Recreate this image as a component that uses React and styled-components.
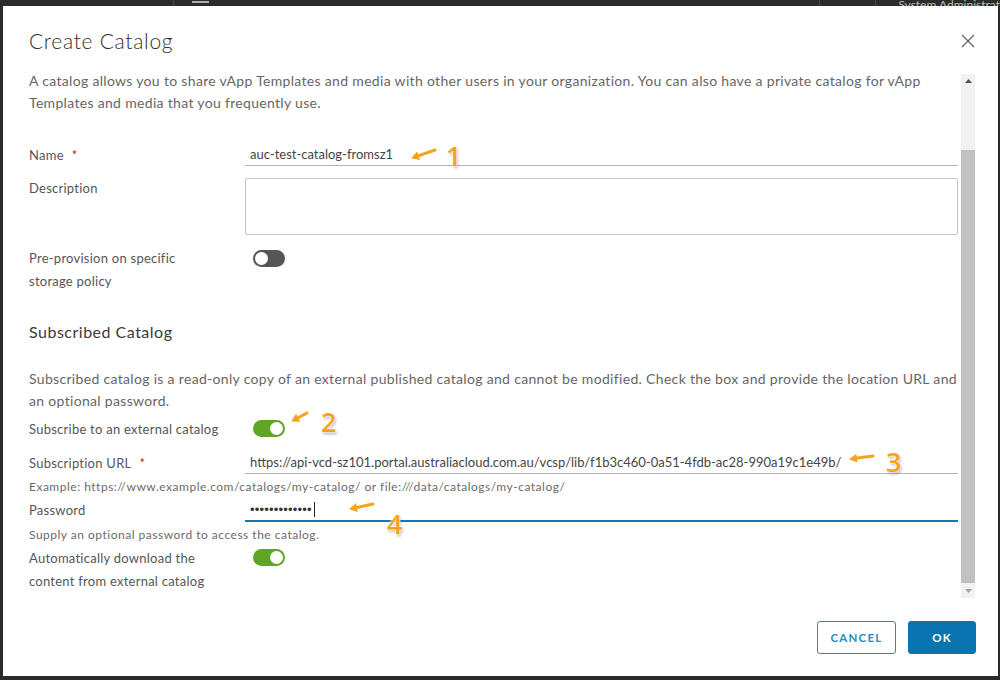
import React from "react";
import styled, { createGlobalStyle } from "styled-components";

const GlobalStyle = createGlobalStyle`
  html, body { margin: 0; padding: 0; background: #2b2b2b; }
  body { font-family: Lato, "Noto Sans", sans-serif; }
  * { box-sizing: border-box; }
`;

const Page = styled.div`
  position: relative;
  width: 1000px;
  height: 680px;
  background: #2b2b2b;
  display: flex;
  flex-direction: column;
  overflow: hidden;
`;

const TopBar = styled.div`
  height: 6px;
  flex: none;
  overflow: hidden;
  display: flex;
  align-items: flex-end;
  color: #bdbdbd;
  font-size: 12px;
`;

const TopSep = styled.div`
  width: 1px;
  height: 6px;
  background: #4a4a4a;
  margin-left: ${(p) => p.$ml}px;
`;

const TopLine = styled.div`
  width: 18px;
  height: 2px;
  background: #aaa;
  margin: 0 0 3px ${(p) => p.$ml}px;
`;

const TopText = styled.div`
  line-height: 14px;
  margin: 0 0 -6px ${(p) => p.$ml}px;
  white-space: nowrap;
`;

const Modal = styled.div`
  flex: 1;
  margin: 0 2px 4px 3px;
  background: #ffffff;
  display: flex;
  flex-direction: column;
  min-height: 0;
`;

const Header = styled.div`
  height: 64px;
  flex: none;
  display: flex;
  align-items: flex-start;
  justify-content: space-between;
  padding: 23px 23px 0 26px;
`;

const Title = styled.h3`
  margin: 0;
  font-size: 21px;
  line-height: 24px;
  font-weight: 300;
  letter-spacing: 0.7px;
  color: #2e2e2e;
`;

const CloseBtn = styled.div`
  width: 14px;
  height: 24px;
  display: flex;
  align-items: center;
  justify-content: center;
  color: #6a6a6a;
`;

const Body = styled.div`
  height: 530px;
  flex: none;
  display: flex;
  padding-left: 26px;
`;

const Content = styled.div`
  width: 929px;
  flex: none;
  overflow: hidden;
`;

const Para = styled.p`
  margin: ${(p) => p.$mt || 0}px 0 0;
  font-size: 14px;
  line-height: 22px;
  letter-spacing: 0.32px;
  white-space: nowrap;
  color: #666666;
`;

const Heading = styled.h4`
  margin: ${(p) => p.$mt}px 0 0;
  font-size: 16px;
  line-height: 22px;
  font-weight: 400;
  letter-spacing: 0.5px;
  color: #3a3a3a;
`;

const Row = styled.div`
  display: grid;
  grid-template-columns: 216px 1fr;
  align-items: start;
  margin-top: ${(p) => p.$mt}px;
`;

const Label = styled.div`
  font-size: 13px;
  line-height: ${(p) => p.$lh || 22}px;
  letter-spacing: 0.25px;
  color: #565656;
`;

const Req = styled.span`
  color: #c92100;
  margin-left: 8px;
`;

const Input = styled.div`
  height: ${(p) => (p.$focus ? 23 : 22)}px;
  line-height: 21px;
  padding-left: 5px;
  font-size: 13px;
  color: #454545;
  border-bottom: ${(p) => (p.$focus ? "2px solid #1277b5" : "1px solid #b3b3b3")};
  white-space: nowrap;
  display: flex;
  align-items: center;
`;

const Dots = styled.span`
  font-family: "Liberation Sans", Arial, sans-serif;
  font-size: 13px;
  letter-spacing: 0.2px;
  color: #333;
`;

const Caret = styled.span`
  width: 1px;
  height: 15px;
  background: #222;
  margin-left: 2px;
`;

const TextArea = styled.div`
  margin-top: 1px;
  height: 57px;
  border: 1px solid #c6c6c6;
  border-radius: 2px;
`;

const Toggle = styled.div`
  margin: ${(p) => p.$mt}px 0 0 8px;
  width: 32px;
  height: 17px;
  border-radius: 9px;
  background: ${(p) => (p.$on ? "#5ea524" : "#565656")};
  display: flex;
  align-items: center;
  justify-content: ${(p) => (p.$on ? "flex-end" : "flex-start")};
  padding: 0 2px;
`;

const Knob = styled.div`
  width: 13px;
  height: 13px;
  border-radius: 50%;
  background: #ffffff;
`;

const Helper = styled.div`
  margin-top: ${(p) => p.$mt}px;
  font-size: 12px;
  line-height: 16px;
  letter-spacing: 0.5px;
  color: #6b6b6b;
`;

const Scrollbar = styled.div`
  width: 14px;
  margin: 4px 0 2px 3px;
  background: #f1f1f1;
  display: flex;
  flex-direction: column;
`;

const ScrollArrow = styled.div`
  height: ${(p) => p.$h}px;
  flex: none;
  display: flex;
  align-items: center;
  justify-content: center;
`;

const ScrollGap = styled.div`
  height: 62px;
  flex: none;
`;

const Thumb = styled.div`
  flex: 1;
  background: #c1c1c1;
`;

const Footer = styled.div`
  flex: 1;
  display: flex;
  justify-content: flex-end;
  align-items: flex-start;
  gap: 12px;
  padding: 21px 22px 0 0;
`;

const Button = styled.div`
  height: 33px;
  width: ${(p) => p.$w}px;
  border-radius: 3px;
  border: 1px solid ${(p) => (p.$primary ? "#0a74b0" : "#2f89c0")};
  background: ${(p) => (p.$primary ? "#0a74b0" : "#ffffff")};
  color: ${(p) => (p.$primary ? "#ffffff" : "#2f89c0")};
  font-size: 11.5px;
  font-weight: 700;
  letter-spacing: 1.2px;
  display: flex;
  align-items: center;
  justify-content: center;
`;

const Overlay = styled.svg`
  position: absolute;
  left: 0;
  top: 0;
  pointer-events: none;
`;

const Num = styled.span`
  position: absolute;
  left: ${(p) => p.$x}px;
  top: ${(p) => p.$y}px;
  font-family: "Open Sans", sans-serif;
  font-size: 27px;
  line-height: 1;
  font-weight: 600;
  color: #f4a41c;
  text-shadow: 0 0 2px #ffffff, 0 0 3px #ffffff, 1px 2px 3px rgba(0, 0, 0, 0.35);
  pointer-events: none;
`;

function Arrow({ hx, hy, tx, ty }) {
  const dx = hx - tx;
  const dy = hy - ty;
  const len = Math.hypot(dx, dy);
  const ux = dx / len;
  const uy = dy / len;
  const nx = -uy;
  const ny = ux;
  const tip = [hx + ux * 1, hy + uy * 1];
  const b1 = [hx - ux * 7 + nx * 4.5, hy - uy * 7 + ny * 4.5];
  const b2 = [hx - ux * 7 - nx * 4.5, hy - uy * 7 - ny * 4.5];
  return (
    <g>
      <line x1={tx} y1={ty} x2={hx - ux * 5} y2={hy - uy * 5} stroke="#f4a41c" strokeWidth="3" strokeLinecap="round" />
      <polygon points={`${tip.join(",")} ${b1.join(",")} ${b2.join(",")}`} fill="#f4a41c" />
    </g>
  );
}

export default function App() {
  return (
    <>
      <GlobalStyle />
      <Page>
        <TopBar>
          <TopSep $ml={173} />
          <TopLine $ml={18} />
          <TopSep $ml={610} />
          <TopSep $ml={56} />
          <TopText $ml={22}>System Administrat</TopText>
        </TopBar>
        <Modal>
          <Header>
            <Title>Create Catalog</Title>
            <CloseBtn>
              <svg width="14" height="14" viewBox="0 0 14 14">
                <path d="M1 1 L13 13 M13 1 L1 13" stroke="currentColor" strokeWidth="1.4" fill="none" />
              </svg>
            </CloseBtn>
          </Header>
          <Body>
            <Content>
              <Para>
                A catalog allows you to share vApp Templates and media with other users in your organization. You can also have a private catalog for vApp
                <br />
                Templates and media that you frequently use.
              </Para>
              <Row $mt={30}>
                <Label>
                  Name<Req>*</Req>
                </Label>
                <Input>auc-test-catalog-fromsz1</Input>
              </Row>
              <Row $mt={11}>
                <Label>Description</Label>
                <TextArea />
              </Row>
              <Row $mt={12}>
                <Label $lh={23}>
                  Pre-provision on specific
                  <br />
                  storage policy
                </Label>
                <Toggle $mt={3}>
                  <Knob />
                </Toggle>
              </Row>
              <Heading $mt={28}>Subscribed Catalog</Heading>
              <Para $mt={25}>
                Subscribed catalog is a read-only copy of an external published catalog and cannot be modified. Check the box and provide the location URL and
                <br />
                an optional password.
              </Para>
              <Row $mt={6}>
                <Label>Subscribe to an external catalog</Label>
                <Toggle $on $mt={2}>
                  <Knob />
                </Toggle>
              </Row>
              <Row $mt={12}>
                <Label>
                  Subscription URL<Req>*</Req>
                </Label>
                <Input>https://api-vcd-sz101.portal.australiacloud.com.au/vcsp/lib/f1b3c460-0a51-4fdb-ac28-990a19c1e49b/</Input>
              </Row>
              <Helper $mt={5}>Example: https://www.example.com/catalogs/my-catalog/ or file:///data/catalogs/my-catalog/</Helper>
              <Row $mt={4}>
                <Label>Password</Label>
                <Input $focus>
                  <Dots>•••••••••••••</Dots>
                  <Caret />
                </Input>
              </Row>
              <Helper $mt={5}>Supply an optional password to access the catalog.</Helper>
              <Row $mt={4}>
                <Label $lh={23}>
                  Automatically download the
                  <br />
                  content from external catalog
                </Label>
                <Toggle $on $mt={2}>
                  <Knob />
                </Toggle>
              </Row>
            </Content>
            <Scrollbar>
              <ScrollArrow $h={14}>
                <svg width="7" height="4" viewBox="0 0 7 4">
                  <polygon points="3.5,0 7,4 0,4" fill="#505050" />
                </svg>
              </ScrollArrow>
              <ScrollGap />
              <Thumb />
              <ScrollArrow $h={15}>
                <svg width="7" height="4" viewBox="0 0 7 4">
                  <polygon points="0,0 7,0 3.5,4" fill="#a3a3a3" />
                </svg>
              </ScrollArrow>
            </Scrollbar>
          </Body>
          <Footer>
            <Button $w={79}>CANCEL</Button>
            <Button $w={68} $primary>
              OK
            </Button>
          </Footer>
        </Modal>
        <Overlay width="1000" height="680" viewBox="0 0 1000 680">
          <Arrow hx={412} hy={158} tx={435} ty={150} />
          <Arrow hx={292} hy={421} tx={307} ty={413} />
          <Arrow hx={850} hy={459} tx={873} ty={456} />
          <Arrow hx={350} hy={509} tx={373} ty={504} />
        </Overlay>
        <Num $x={446} $y={142}>1</Num>
        <Num $x={321} $y={408}>2</Num>
        <Num $x={886} $y={448}>3</Num>
        <Num $x={387} $y={510}>4</Num>
      </Page>
    </>
  );
}
